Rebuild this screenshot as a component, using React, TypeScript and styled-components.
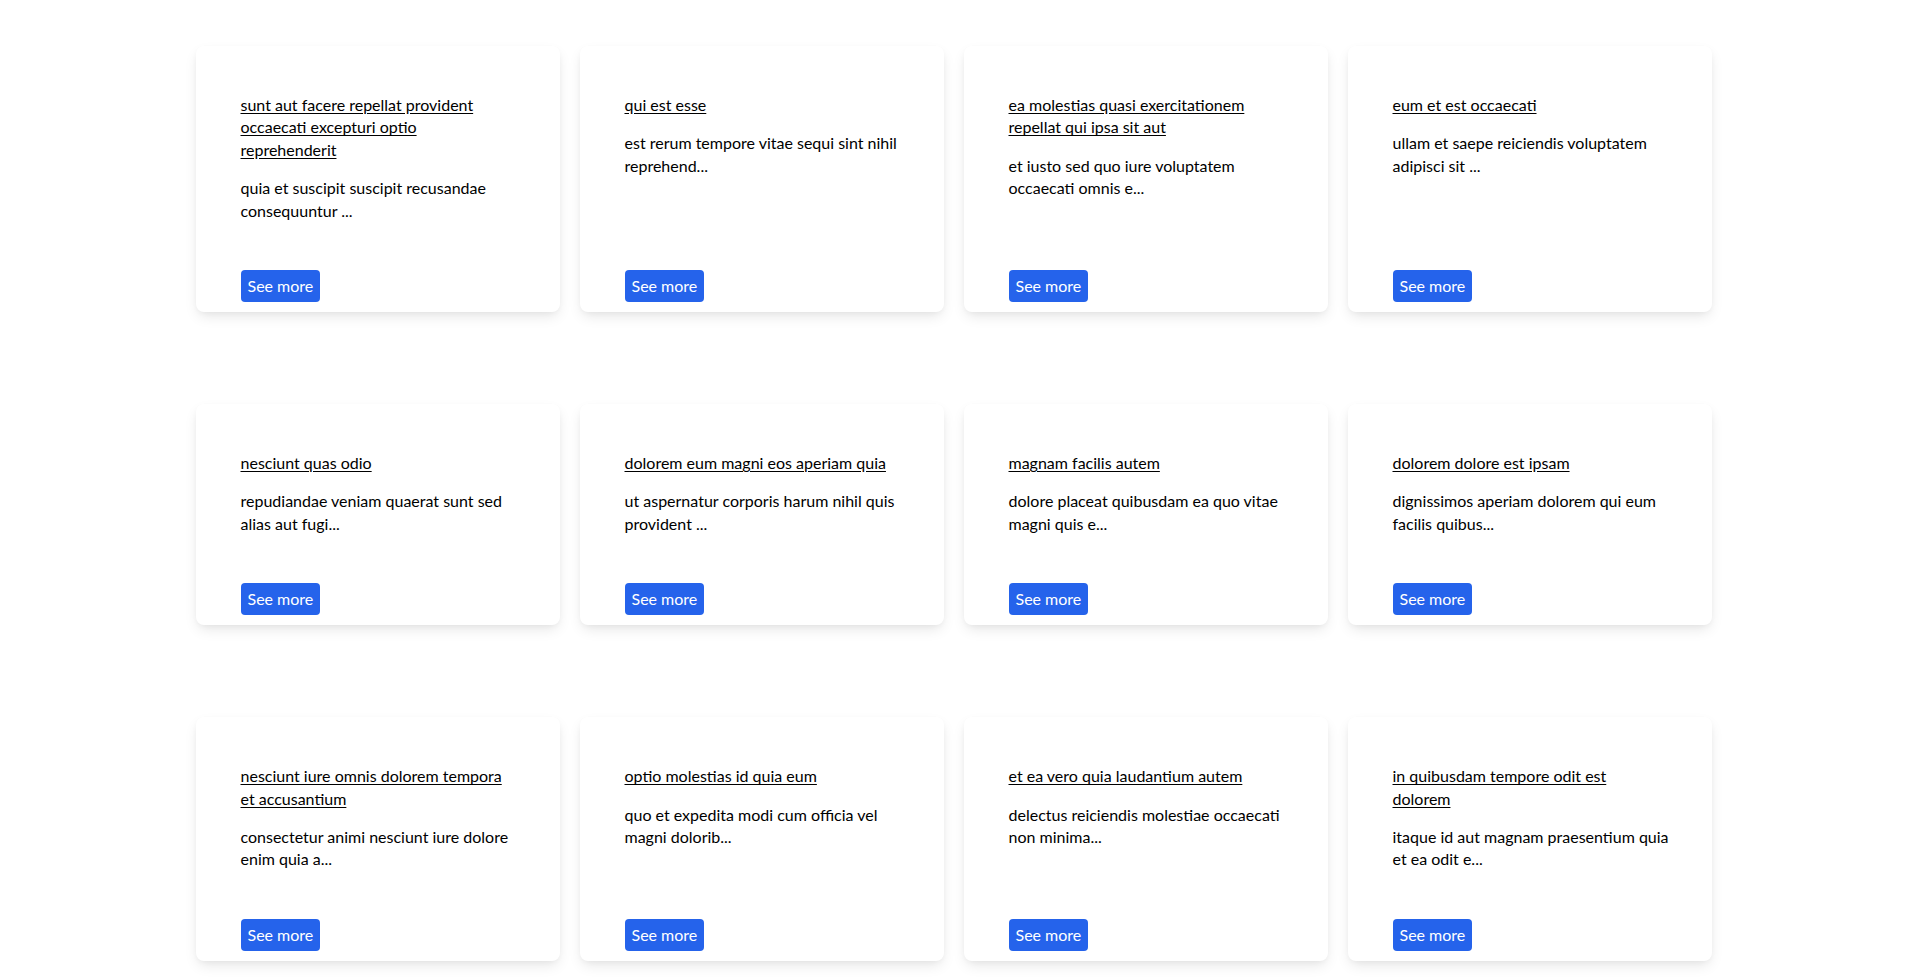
import React from "react";
import styled, { createGlobalStyle } from "styled-components";

const GlobalStyle = createGlobalStyle`
  html, body {
    margin: 0;
    padding: 0;
    background: #ffffff;
  }
  body {
    font-family: Lato, "Open Sans", sans-serif;
    color: #000000;
  }
  ::-webkit-scrollbar {
    width: 2px;
    height: 2px;
  }
  ::-webkit-scrollbar-track {
    background: #f1f1f1;
  }
  ::-webkit-scrollbar-thumb {
    background: #c1c1c1;
  }
`;

const Page = styled.main`
  padding: 46px 0 46px;
`;

const Grid = styled.div`
  width: 1516px;
  margin: 0 auto;
  display: grid;
  grid-template-columns: repeat(4, 1fr);
  column-gap: 20px;
  row-gap: 92px;
`;

const Card = styled.article`
  background: #ffffff;
  border-radius: 8px;
  box-shadow: 0 6px 14px -2px rgba(0, 0, 0, 0.1), 0 2px 6px -2px rgba(0, 0, 0, 0.06);
  padding: 48px 41px 10px 45px;
  display: flex;
  flex-direction: column;
  align-items: flex-start;
`;

const TitleBox = styled.h2`
  margin: 0 0 16px;
  padding-right: 10px;
  font-size: 16px;
  font-weight: 400;
  line-height: 22.4px;
`;

const Title = styled.a`
  color: #000000;
  text-decoration: underline;
  text-underline-offset: 2px;
  cursor: pointer;
`;

const Body = styled.p`
  font-size: 16px;
  line-height: 22.4px;
  margin: 0 0 48px;
`;

const MoreButton = styled.button`
  margin-top: auto;
  font-family: Lato, "Open Sans", sans-serif;
  font-size: 16px;
  line-height: 22px;
  padding: 5px 7px;
  background: #2563eb;
  color: #ffffff;
  border: none;
  border-radius: 4px;
  cursor: pointer;
`;

const posts = [
  ["sunt aut facere repellat provident occaecati excepturi optio reprehenderit", "quia et suscipit suscipit recusandae consequuntur ..."],
  ["qui est esse", "est rerum tempore vitae sequi sint nihil reprehend..."],
  ["ea molestias quasi exercitationem repellat qui ipsa sit aut", "et iusto sed quo iure voluptatem occaecati omnis e..."],
  ["eum et est occaecati", "ullam et saepe reiciendis voluptatem adipisci sit ..."],
  ["nesciunt quas odio", "repudiandae veniam quaerat sunt sed alias aut fugi..."],
  ["dolorem eum magni eos aperiam quia", "ut aspernatur corporis harum nihil quis provident ..."],
  ["magnam facilis autem", "dolore placeat quibusdam ea quo vitae magni quis e..."],
  ["dolorem dolore est ipsam", "dignissimos aperiam dolorem qui eum facilis quibus..."],
  ["nesciunt iure omnis dolorem tempora et accusantium", "consectetur animi nesciunt iure dolore enim quia a..."],
  ["optio molestias id quia eum", "quo et expedita modi cum officia vel magni dolorib..."],
  ["et ea vero quia laudantium autem", "delectus reiciendis molestiae occaecati non minima..."],
  ["in quibusdam tempore odit est dolorem", "itaque id aut magnam praesentium quia et ea odit e..."],
];

export default function App() {
  return (
    <>
      <GlobalStyle />
      <Page>
        <Grid>
          {posts.map(([title, body], i) => (
            <Card key={i}>
              <TitleBox>
                <Title href="#">{title}</Title>
              </TitleBox>
              <Body>{body}</Body>
              <MoreButton>See more</MoreButton>
            </Card>
          ))}
        </Grid>
      </Page>
    </>
  );
}
